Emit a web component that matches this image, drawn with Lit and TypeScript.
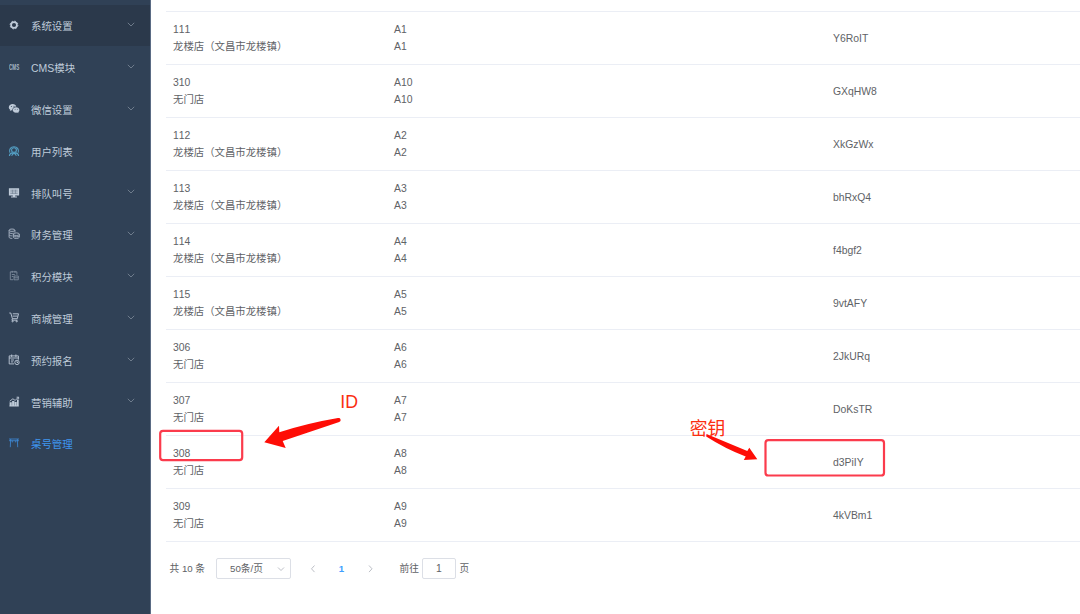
import { LitElement, html, css, svg } from 'lit';
import { customElement, property } from 'lit/decorators.js';

const icons: Record<string, unknown> = {
  gear: svg`
    <circle cx="6" cy="6" r="2.9" fill="none" stroke="currentColor" stroke-width="1.7" />
    <circle cx="6" cy="6" r="3.9" fill="none" stroke="currentColor" stroke-width="1" stroke-dasharray="1.53 1.53" />`,
  cms: svg`
    <text x="1" y="8.600" font-size="9" font-weight="700" textLength="10.200" lengthAdjust="spacingAndGlyphs" opacity=".85">CMS</text>`,
  wechat: svg`
    <path fill="currentColor" d="M4.700 1C2.500 1 .8 2.400.8 4.200c0 1 .6 1.900 1.400 2.500l-.4 1.300 1.500-.8 1 .2C4 5.300 5.700 3.500 8.300 3.500 7.900 2 6.500 1 4.700 1z" />
    <path fill="currentColor" d="M8.100 4.200c-1.900 0-3.300 1.200-3.300 2.800s1.400 2.800 3.300 2.800l1.100-.2 1.300.7-.3-1.100c.7-.5 1.200-1.300 1.200-2.200 0-1.600-1.500-2.800-3.300-2.800z" />
    <g fill="#304156"><circle cx="3.400" cy="3.400" r=".5" /><circle cx="6" cy="3.200" r=".5" /><circle cx="7.100" cy="6.300" r=".45" /><circle cx="9.300" cy="6.300" r=".45" /></g>`,
  user: svg`
    <g fill="none" stroke="#549fc4" stroke-width="1.1">
      <path d="M1.800 7.600C.9 4.200 2.800 1.700 6 1.700s5.100 2.500 4.200 5.900" />
      <path d="M3.600 5c0-1.400 1-2.200 2.400-2.200s2.400.8 2.400 2.200S7.400 7.400 6 7.400 3.600 6.400 3.600 5z" />
      <path d="M1.400 11C1.600 9 3 7.800 4.600 7.600M10.600 11C10.400 9 9 7.800 7.400 7.600M3.600 10.800L5 8.600h2l1.400 2.200" />
    </g>`,
  monitor: svg`
    <path fill="currentColor" d="M.9 1.200h10.200v7.200H.9zM4.800 8.400h2.400v1H9v1H3v-1h1.800z" />
    <path fill="none" stroke="#6f7e90" stroke-width=".6" d="M2.300 3.200h7.400M2.300 4.900h7.400M2.300 6.500h7.400M4.500 2.800v4M7.500 2.800v4" />`,
  coins: svg`
    <g fill="none" stroke="currentColor" stroke-width=".9" opacity=".85">
      <ellipse cx="4" cy="2.200" rx="2.900" ry="1.200" />
      <path d="M1.100 2.200v7c0 .8 1.500 1.200 3.200 1.200M6.900 2.200v2.100M1.100 4.500c.5 1 3 1.200 4.500.6M1.100 6.900c.5.800 2 1 3.200.9" />
      <ellipse cx="8.300" cy="6.200" rx="3" ry="1.300" />
      <path d="M5.300 6.200v3.100c.5 1.600 5.500 1.600 6 0V6.200M5.300 7.900c.5 1.300 5.500 1.300 6 0" />
    </g>`,
  points: svg`
    <g fill="none" stroke="currentColor" stroke-width=".8" opacity=".6">
      <path d="M5.200 9.700H2.300V1.800h6.600v2.900M4.200.8v2M7 .8v2M3.800 4.500h3M3.800 6.500h1.500" />
      <path d="M6 6h4.300v3.800H6zM6 7.800h4.300" />
    </g>`,
  cart: svg`
    <g fill="none" stroke="currentColor" stroke-width=".9">
      <path d="M1.300 1h1.500l1.600 5.700h4.900l1.200-4.900H4.800M4.600 4.100h5M4.400 6.700l-.5 1.500h5.600" />
      <circle cx="4.600" cy="9.300" r=".6" /><circle cx="8.700" cy="9.300" r=".6" />
    </g>`,
  calendar: svg`
    <g fill="none" stroke="currentColor" stroke-width=".9">
      <path d="M6 9.900H1.200V1.900h9.200v3.800M3.700.5v2.600M7.900.5v2.600M1.200 4h9.200M3 6h3M3 7.900h2.200" />
      <circle cx="9" cy="8.400" r="2.200" /><path d="M9 7.100v1.400h1.200" />
    </g>`,
  chart: svg`
    <path fill="currentColor" d="M1.600 6.200h2.200v4H1.600zM4.100 5h2.300v5.200H4.100zM6.700 5.900h2v4.300h-2zM9 3.500h1.700v6.700H9zM1.400 9.600h9.400v.8H1.400z" />
    <path fill="none" stroke="currentColor" stroke-width=".9" d="M1.700 5.200l3.200-2.400 2.200 1.600 3.300-3M8.600 1.200h2v1.700" />`,
  table: svg`
    <path fill="none" stroke="currentColor" stroke-width=".9" opacity=".75" d="M1 2h10M1 3.700h10M2.700 2L2.300 10.200M9.300 2l.4 8.200M4.300 3.700v1.700M7.700 3.700v1.700" />`,
};

const menu = [
  { icon: 'gear', label: '系统设置', arrow: true, open: true },
  { icon: 'cms', label: 'CMS模块', arrow: true },
  { icon: 'wechat', label: '微信设置', arrow: true },
  { icon: 'user', label: '用户列表' },
  { icon: 'monitor', label: '排队叫号', arrow: true },
  { icon: 'coins', label: '财务管理', arrow: true },
  { icon: 'points', label: '积分模块', arrow: true },
  { icon: 'cart', label: '商城管理', arrow: true },
  { icon: 'calendar', label: '预约报名', arrow: true },
  { icon: 'chart', label: '营销辅助', arrow: true },
  { icon: 'table', label: '桌号管理', active: true },
];

const dragon = '龙楼店（文昌市龙楼镇）';
const none = '无门店';

const rows = [
  { id: '111', store: dragon, name: 'A1', key: 'Y6RoIT' },
  { id: '310', store: none, name: 'A10', key: 'GXqHW8' },
  { id: '112', store: dragon, name: 'A2', key: 'XkGzWx' },
  { id: '113', store: dragon, name: 'A3', key: 'bhRxQ4' },
  { id: '114', store: dragon, name: 'A4', key: 'f4bgf2' },
  { id: '115', store: dragon, name: 'A5', key: '9vtAFY' },
  { id: '306', store: none, name: 'A6', key: '2JkURq' },
  { id: '307', store: none, name: 'A7', key: 'DoKsTR' },
  { id: '308', store: none, name: 'A8', key: 'd3PiIY' },
  { id: '309', store: none, name: 'A9', key: '4kVBm1' },
];

@customElement('side-menu')
export class SideMenu extends LitElement {
  static override styles = css`
    :host {
      display: block;
      box-sizing: border-box;
      width: 151px;
      height: 614px;
      padding-top: 4.6px;
      background: #304156;
      border-right: 1px solid #5a6b84;
      color: #bfcbd9;
    }
    .item {
      display: flex;
      align-items: center;
      box-sizing: border-box;
      height: 41.8px;
      padding: 0 15px 0 8px;
      font-size: 10.45px;
    }
    .item--open {
      background: #2b394b;
    }
    .item--active {
      color: #3f96f0;
    }
    .icon {
      width: 12px;
      height: 12px;
      margin-right: 11px;
      overflow: visible;
      fill: currentColor;
    }
    .label {
      flex: 1;
      padding-top: 0.8px;
    }
    .arrow {
      width: 8px;
      height: 5px;
      margin-bottom: 1.5px;
      fill: none;
      stroke: #7f8c9b;
      stroke-width: 0.8;
    }
  `;
  override render() {
    return html`
      ${menu.map(
        (m) => html`
          <div class="item ${m.open ? 'item--open' : ''} ${m.active ? 'item--active' : ''}">
            <svg class="icon" viewBox="0 0 12 12">${icons[m.icon]}</svg>
            <span class="label">${m.label}</span>
            ${m.arrow ? html`<svg class="arrow" viewBox="0 0 8 5"><path d="M.8.800l3.200 3.200 3.200-3.200" /></svg>` : ''}
          </div>
        `
      )}
    `;
  }
}

@customElement('table-pager')
export class TablePager extends LitElement {
  @property({ type: Number }) total = 10;

  static override styles = css`
    :host {
      display: flex;
      align-items: center;
      height: 21px;
      padding: 16px 0 0 3.5px;
      font-size: 9.7px;
      color: #606266;
    }
    .text {
      padding-bottom: 1px;
      white-space: nowrap;
    }
    .text--total {
      width: 46.5px;
    }
    .select, .input {
      display: flex;
      align-items: center;
      box-sizing: border-box;
      height: 21px;
      border: 1px solid #dcdfe6;
      border-radius: 2px;
    }
    .select {
      justify-content: space-between;
      width: 75px;
      padding: 0 5px 0 13px;
    }
    .input {
      justify-content: center;
      width: 34px;
      margin: 0 3.5px 0 3px;
      font-size: 10.4px;
    }
    .chevron {
      width: 8px;
      height: 8px;
      fill: none;
      stroke: #b4b8c0;
      stroke-width: 0.9;
    }
    .pages {
      display: flex;
      align-items: center;
      justify-content: space-between;
      width: 66px;
      margin: 0 25px 0 17.5px;
    }
    .current {
      color: #409eff;
      font-weight: 700;
    }
  `;
  override render() {
    return html`
      <span class="text text--total">共 ${this.total} 条</span>
      <div class="select">
        <span class="text">50条/页</span>
        <svg class="chevron" viewBox="0 0 8 8"><path d="M1 2.500l3 3 3-3" /></svg>
      </div>
      <div class="pages">
        <svg class="chevron" viewBox="0 0 8 8"><path d="M5.500.500l-3 3.300 3 3.300" /></svg>
        <span class="current">1</span>
        <svg class="chevron" viewBox="0 0 8 8"><path d="M3 .5l3 3.300-3 3.300" /></svg>
      </div>
      <span class="text">前往</span>
      <div class="input">1</div>
      <span class="text">页</span>
    `;
  }
}

@customElement('app-root')
export default class AppRoot extends LitElement {
  static override styles = css`
    :host {
      display: flex;
      position: relative;
      width: 1080px;
      height: 614px;
      overflow: hidden;
      background: #fff;
      font-family: 'Liberation Sans', 'Noto Sans CJK SC', sans-serif;
      font-kerning: none;
    }
    .main {
      flex: 1;
      padding: 11px 0 0 15px;
    }
    .table {
      border-top: 1px solid #ebeef5;
      font-size: 10.4px;
      line-height: 17px;
      color: #606266;
    }
    .row {
      display: grid;
      grid-template-columns: 221px 439px 1fr;
      align-items: center;
      box-sizing: border-box;
      height: 53px;
      padding-left: 7px;
      border-bottom: 1px solid #ebeef5;
    }
    .line {
      height: 17px;
      white-space: nowrap;
    }
    .marks {
      position: absolute;
      inset: 0;
      width: 1080px;
      height: 614px;
    }
    .frame {
      fill: none;
      stroke: #fb3b4c;
      stroke-width: 2.2;
    }
    .pointer {
      fill: #fe0d06;
    }
    .note {
      fill: #fb2e10;
      font-size: 17.8px;
    }
  `;
  override render() {
    return html`
      <side-menu></side-menu>
      <main class="main">
        <div class="table">
          ${rows.map(
            (r) => html`
              <div class="row">
                <div>
                  <div class="line">${r.id}</div>
                  <div class="line">${r.store}</div>
                </div>
                <div>
                  <div class="line">${r.name}</div>
                  <div class="line">${r.name}</div>
                </div>
                <div class="line">${r.key}</div>
              </div>
            `
          )}
        </div>
        <table-pager .total=${rows.length}></table-pager>
      </main>
      <svg class="marks" viewBox="0 0 1080 614">
        <rect class="frame" x="160.200" y="430.800" width="82" height="29.300" rx="2.800" />
        <rect class="frame" x="765.500" y="440.200" width="118.500" height="35.300" rx="2.800" />
        <path class="pointer" d="M264.300 442.300L279 425.700l.3 6.600q29-9.200 58.700-14.200a2 2 0 0 1 1.200 3.900Q311 431.500 282.700 441l3 7z" />
        <path class="pointer" d="M706.500 434L747.300 451l2-3.300 8 11.500-13.500.9 1.900-3.700q-20-7.500-39.500-20z" />
        <text class="note" x="340.200" y="407.600">ID</text>
        <text class="note" x="689.700" y="435.400">密钥</text>
      </svg>
    `;
  }
}
